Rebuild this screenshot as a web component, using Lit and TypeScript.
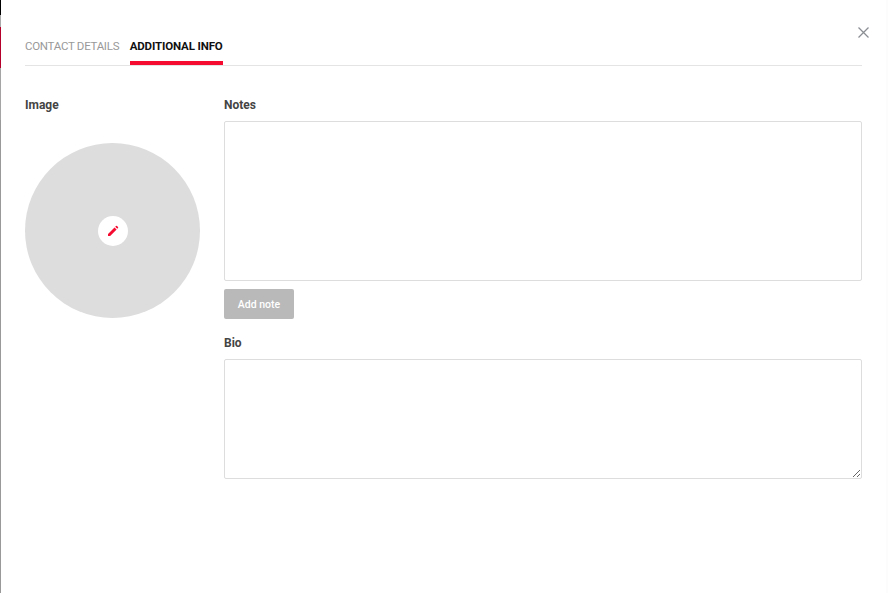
import { LitElement, html, css } from "lit";
import { customElement } from "lit/decorators.js";

@customElement("app-root")
export class AppRoot extends LitElement {
  static styles = css`
    :host { display: block; width: 888px; height: 593px; overflow: hidden; background: #fff; font-family: Roboto, sans-serif; color: #444; }
    * { box-sizing: border-box; }
    .page { display: flex; height: 593px; }
    .strip { width: 1px; flex: none; background: linear-gradient(#000 0 15px, #aaa 15px 27px, #b5002c 27px 68px, #a5a5a5 68px 120px, #999 120px); }
    .edge { width: 2px; flex: none; background: #fcfcfc; }
    .modal { flex: 1; padding: 0 24px 0 24px; display: flex; flex-direction: column; position: relative; }
    .close { position: absolute; top: 27px; right: 17px; width: 11px; height: 11px; padding: 0; border: 0; background: none; display: flex; }
    .tabs { display: flex; gap: 10.500px; height: 66px; padding-top: 38px; border-bottom: 1px solid #e4e4e4; font-size: 11.500px; line-height: 17px; }
    .tab { color: #999; height: 27px; letter-spacing: -0.28px; }
    .tab.on { color: #111; font-weight: 700; letter-spacing: -0.14px; border-bottom: 4px solid #f50a30; }
    .body { display: flex; gap: 24px; padding-top: 31px; }
    .left { width: 175px; flex: none; }
    .right { flex: 1; display: flex; flex-direction: column; }
    .label { font-size: 12px; font-weight: 700; line-height: 16px; color: #444; }
    .avatar { margin-top: 30px; width: 175px; height: 175px; border-radius: 50%; background: #ddd; display: flex; align-items: center; justify-content: center; }
    .edit { width: 30px; height: 30px; border-radius: 50%; background: #fff; display: flex; align-items: center; justify-content: center; }
    textarea { display: block; width: 100%; margin: 0; border: 1px solid #ddd; border-radius: 2px; background: #fff; outline: none; padding: 8px; }
    .notes { height: 160px; margin-top: 8px; resize: none; }
    .bio { height: 120px; margin-top: 8px; resize: vertical; }
    .btn { width: 70px; height: 30px; margin-top: 8px; border: 0; border-radius: 2px; background: #b9b9b9; color: #fff; font: 500 10.500px Roboto, sans-serif; padding: 0; }
    .label.b { margin-top: 16px; }
  `;

  render() {
    return html`
      <div class="page">
        <div class="strip"></div>
        <div class="modal">
          <button class="close" aria-label="Close">
            <svg width="11" height="11" viewBox="0 0 11 11"><path d="M.5.500l10 10M10.500.500l-10 10" stroke="#8b8f94" stroke-width="1.300" fill="none"/></svg>
          </button>
          <div class="tabs">
            <div class="tab">CONTACT DETAILS</div>
            <div class="tab on">ADDITIONAL INFO</div>
          </div>
          <div class="body">
            <div class="left">
              <div class="label">Image</div>
              <div class="avatar">
                <div class="edit">
                  <svg width="12" height="12" viewBox="0 0 12 12"><path d="M1 11V8.900L7.500 2.400l2.100 2.100L3.100 11zM8.200 1.700l.8-.7a.7.7 0 0 1 1 0l1 1a.7.7 0 0 1 0 1l-.7.800z" fill="#f50a30"/></svg>
                </div>
              </div>
            </div>
            <div class="right">
              <div class="label">Notes</div>
              <textarea class="notes"></textarea>
              <button class="btn">Add note</button>
              <div class="label b">Bio</div>
              <textarea class="bio"></textarea>
            </div>
          </div>
        </div>
        <div class="edge"></div>
      </div>
    `;
  }
}
